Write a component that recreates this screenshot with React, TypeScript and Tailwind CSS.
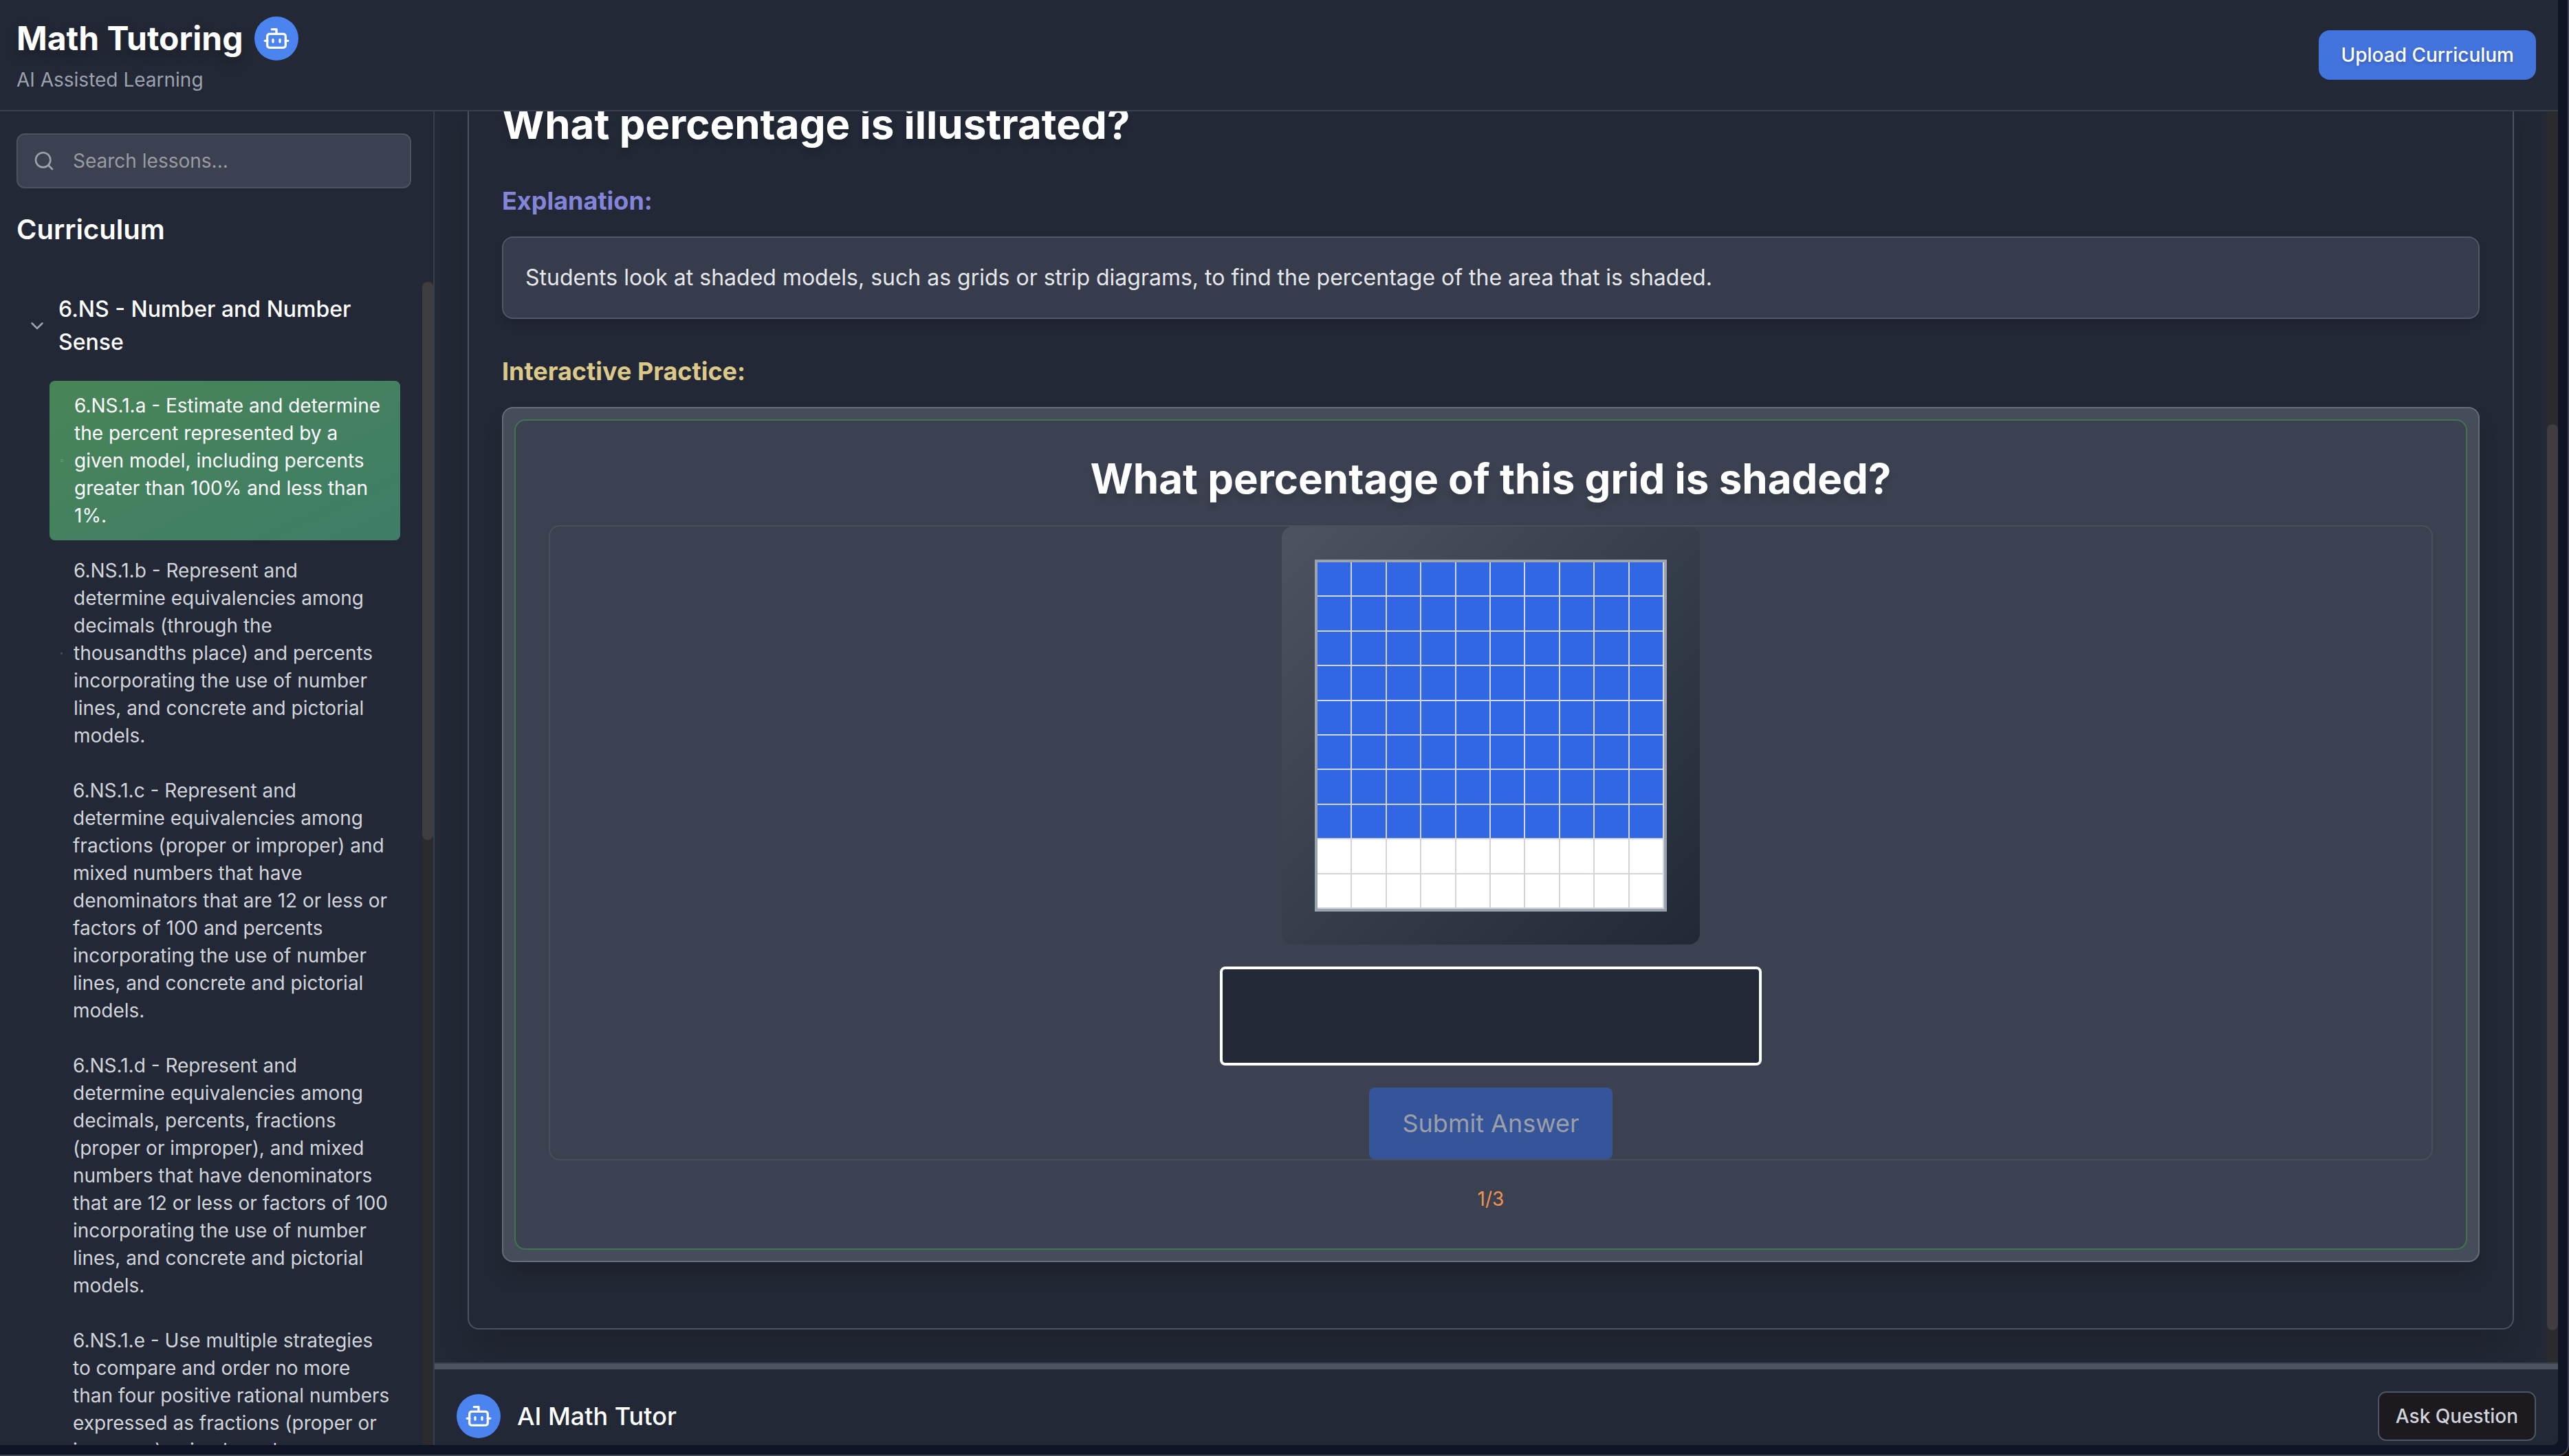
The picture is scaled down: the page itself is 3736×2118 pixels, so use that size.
import { Bot, ChevronDown, Search } from "lucide-react";

const lessons = [
  {
    text: "6.NS.1.a - Estimate and determine the percent represented by a given model, including percents greater than 100% and less than 1%.",
    tone: "bg-linear-to-br from-[#488556] to-[#3f7d68] pr-4 text-white",
    marker: "size-1 rounded-[1px] border border-[#7c9a93]/70",
  },
  {
    text: "6.NS.1.b - Represent and determine equivalencies among decimals (through the thousandths place) and percents incorporating the use of number lines, and concrete and pictorial models.",
    tone: "pr-4 text-[#d1d5db]",
    marker: "size-[3px] rounded-full border border-[#7c8a93]/60",
  },
  {
    text: "6.NS.1.c - Represent and determine equivalencies among fractions (proper or improper) and mixed numbers that have denominators that are 12 or less or factors of 100 and percents incorporating the use of number lines, and concrete and pictorial models.",
    tone: "pr-3 text-[#d1d5db]",
    marker: "size-0.5",
  },
  {
    text: "6.NS.1.d - Represent and determine equivalencies among decimals, percents, fractions (proper or improper), and mixed numbers that have denominators that are 12 or less or factors of 100 incorporating the use of number lines, and concrete and pictorial models.",
    tone: "pr-3 text-[#d1d5db]",
    marker: "size-0.5",
  },
  {
    text: "6.NS.1.e - Use multiple strategies to compare and order no more than four positive rational numbers expressed as fractions (proper or improper), mixed numbers, decimals, and percents.",
    tone: "pr-3 text-[#d1d5db]",
    marker: "size-0.5",
  },
];

const cells = Array.from({ length: 100 }, (_, i) => i < 80);

function Avatar() {
  return (
    <span className="flex size-16 shrink-0 items-center justify-center rounded-full bg-[#4b84ee] text-white">
      <Bot className="size-10" />
    </span>
  );
}

function Header() {
  return (
    <header className="flex shrink-0 items-center justify-between border-b-2 border-[#384050] px-6 py-6 pr-8">
      <div>
        <div className="flex items-center gap-4">
          <h1 className="text-[48px] leading-16 font-bold text-white [text-shadow:0_8px_16px_rgba(0,0,0,0.25)]">Math Tutoring</h1>
          <Avatar />
        </div>
        <p className="mt-2 text-[28px] leading-10 text-[#9ca3af]">AI Assisted Learning</p>
      </div>
      <button className="h-18 rounded-2xl bg-[#4373dc] px-8 text-[28px] leading-10 font-medium text-white [text-shadow:0_2px_4px_rgba(0,0,0,0.2)]">
        Upload Curriculum
      </button>
    </header>
  );
}

function Sidebar() {
  return (
    <aside className="flex w-158 shrink-0 flex-col border-r-2 border-[#384050]">
      <div className="px-6 pt-8 pr-8 pb-12">
        <label className="flex h-20 items-center gap-6.5 rounded-xl border-2 border-[#4d5361] bg-[#3b4150] pl-5.5">
          <Search className="size-8 shrink-0 text-[#9ca3af]" />
          <input
            type="text"
            aria-label="Search lessons"
            placeholder="Search lessons..."
            className="min-w-0 flex-1 bg-transparent text-[28px] leading-10 text-white outline-none placeholder:text-[#9a9ba1]"
          />
        </label>
        <h2 className="mt-8 text-[40px] leading-14 font-semibold text-white">Curriculum</h2>
      </div>
      <div className="flex min-h-0 flex-1">
        <nav aria-label="Lessons" className="min-w-0 flex-1 overflow-hidden pt-4 pr-8 pl-6">
          <button className="flex w-full items-center gap-4 pr-4 pl-[15px] text-left text-[32px] leading-12 font-medium text-white">
            <ChevronDown className="size-[30px] shrink-0 text-[#9ca3af]" />
            <span>6.NS - Number and Number Sense</span>
          </button>
          <ul className="mt-8 flex flex-col gap-2 pl-12">
            {lessons.map((lesson) => (
              <li key={lesson.text}>
                <button className={`flex w-full items-center gap-4 rounded-lg py-4 pl-4 text-left text-[28px] leading-10 ${lesson.tone}`}>
                  <span className={`shrink-0 ${lesson.marker}`} />
                  <span>{lesson.text}</span>
                </button>
              </li>
            ))}
          </ul>
        </nav>
        <div className="w-4 shrink-0 bg-[#2b2a2d]">
          <div className="h-[48%] rounded-full bg-[#3f3d40]" />
        </div>
      </div>
    </aside>
  );
}

function PercentGrid() {
  return (
    <div className="rounded-2xl bg-linear-to-br from-[#4d5461] to-[#212936] p-12">
      <div role="img" aria-label="Grid of 100 squares, 80 shaded" className="grid size-128 grid-cols-10 grid-rows-10 border-4 border-[#9ca3af] bg-white">
        {cells.map((shaded, i) => (
          <div key={i} className={shaded ? "border-r-2 border-b-2 border-[#d1d5db] bg-[#3267e3]" : "border-r-2 border-b-2 border-[#d1d5db] bg-white"} />
        ))}
      </div>
    </div>
  );
}

function Practice() {
  return (
    <div className="mt-6 rounded-2xl border-2 border-[#666d79] bg-[#464d5a] p-4 shadow-[0_20px_30px_-6px_rgba(0,0,0,0.2)]">
      <div className="rounded-2xl border-2 border-[#427450] bg-[#3b4150] p-12 text-center">
        <h3 className="text-[60px] leading-18 font-bold text-white [text-shadow:0_8px_6px_rgba(0,0,0,0.12)]">What percentage of this grid is shaded?</h3>
        <form className="mt-8 flex flex-col items-center gap-8 rounded-2xl border-2 border-[#484f5d]" onSubmit={(e) => e.preventDefault()}>
          <PercentGrid />
          <input
            type="text"
            aria-label="Your answer"
            className="h-36 w-197 rounded-lg border-4 border-white bg-[#222835] px-8 text-center text-[48px] text-white outline-none"
          />
          <button disabled className="rounded-lg bg-[#36549a] px-12 py-6 text-[36px] leading-14 text-[#9b9fa8]">
            Submit Answer
          </button>
        </form>
        <p className="mt-8 text-[28px] leading-12 text-[#ed9550]">1/3</p>
      </div>
    </div>
  );
}

function Lesson() {
  return (
    <main className="flex min-h-0 flex-1">
      <div className="flex min-w-0 flex-1 flex-col justify-end overflow-hidden px-12 pb-12">
        <article className="shrink-0 rounded-2xl border-2 border-[#4b5160] p-12 pb-24 shadow-[0_40px_50px_-10px_rgba(0,0,0,0.15)]">
          <h2 className="text-[60px] leading-18 font-bold text-white [text-shadow:0_8px_6px_rgba(0,0,0,0.12)]">What percentage is illustrated?</h2>
          <h3 className="mt-12 text-[36px] leading-14 font-bold text-[#8485d8]">Explanation:</h3>
          <p className="mt-6 rounded-2xl border-2 border-[#50576a] bg-[#363c4b] p-8 text-[32px] leading-13 text-[#e5e7eb] shadow-[0_8px_12px_-2px_rgba(0,0,0,0.15)]">
            Students look at shaded models, such as grids or strip diagrams, to find the percentage of the area that is shaded.
          </p>
          <h3 className="mt-12 text-[36px] leading-14 font-bold text-[#dcc98a]">Interactive Practice:</h3>
          <Practice />
        </article>
      </div>
      <div className="flex w-4 shrink-0 flex-col bg-[#2b2a2d]">
        <div className="flex-[455]" />
        <div className="flex-[1318] rounded-full bg-[#3f3d40]" />
        <div className="flex-[47]" />
      </div>
    </main>
  );
}

function TutorBar() {
  return (
    <footer className="h-30 shrink-0 overflow-hidden border-t-2 border-[#3b4252]">
      <div className="h-2 bg-[#4d5361]" />
      <div className="flex items-center justify-between p-8">
        <div className="flex items-center gap-6">
          <Avatar />
          <h2 className="text-[36px] leading-14 font-medium text-white">AI Math Tutor</h2>
        </div>
        <button className="h-18 rounded-xl border-2 border-[#4b5563] bg-[#1c1a1f] px-6 text-[28px] leading-10 font-medium text-[#d1d5db]">
          Ask Question
        </button>
      </div>
    </footer>
  );
}

export default function App() {
  return (
    <div className="h-screen overflow-hidden bg-[#1a0f0c] font-['Inter',sans-serif]">
      <div className="h-full rounded-br-2xl border-r-2 border-b-2 border-[#3f4350] bg-[#0e1424] pr-3.5 pb-3.5">
        <div className="flex h-full flex-col overflow-hidden rounded-br-lg bg-[#222835]">
          <Header />
          <div className="flex min-h-0 flex-1">
            <Sidebar />
            <div className="flex min-w-0 flex-1 flex-col">
              <Lesson />
              <TutorBar />
            </div>
          </div>
        </div>
      </div>
    </div>
  );
}
